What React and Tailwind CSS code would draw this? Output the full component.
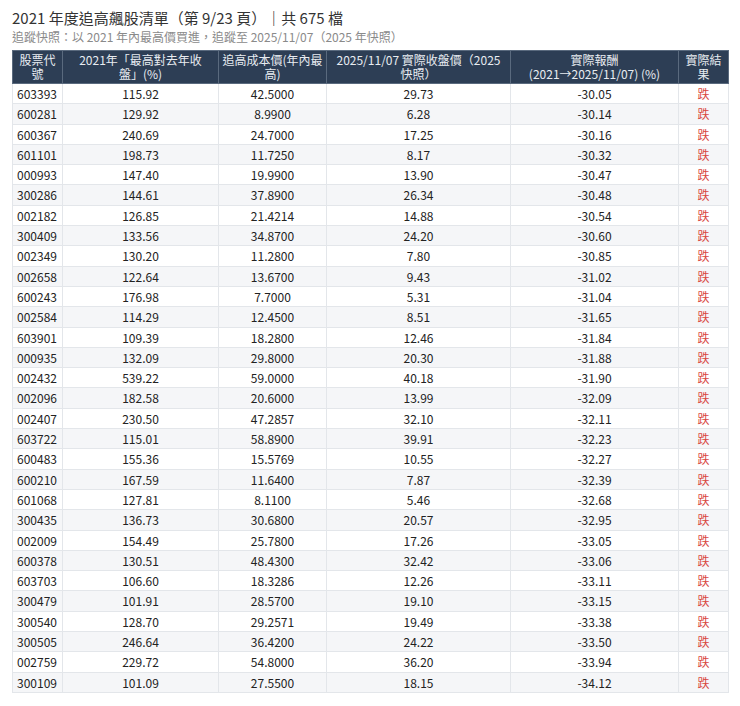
import React from "react";

const rows = [
  ["603393","115.92","42.5000","29.73","-30.05"],
  ["600281","129.92","8.9900","6.28","-30.14"],
  ["600367","240.69","24.7000","17.25","-30.16"],
  ["601101","198.73","11.7250","8.17","-30.32"],
  ["000993","147.40","19.9900","13.90","-30.47"],
  ["300286","144.61","37.8900","26.34","-30.48"],
  ["002182","126.85","21.4214","14.88","-30.54"],
  ["300409","133.56","34.8700","24.20","-30.60"],
  ["002349","130.20","11.2800","7.80","-30.85"],
  ["002658","122.64","13.6700","9.43","-31.02"],
  ["600243","176.98","7.7000","5.31","-31.04"],
  ["002584","114.29","12.4500","8.51","-31.65"],
  ["603901","109.39","18.2800","12.46","-31.84"],
  ["000935","132.09","29.8000","20.30","-31.88"],
  ["002432","539.22","59.0000","40.18","-31.90"],
  ["002096","182.58","20.6000","13.99","-32.09"],
  ["002407","230.50","47.2857","32.10","-32.11"],
  ["603722","115.01","58.8900","39.91","-32.23"],
  ["600483","155.36","15.5769","10.55","-32.27"],
  ["600210","167.59","11.6400","7.87","-32.39"],
  ["601068","127.81","8.1100","5.46","-32.68"],
  ["300435","136.73","30.6800","20.57","-32.95"],
  ["002009","154.49","25.7800","17.26","-33.05"],
  ["600378","130.51","48.4300","32.42","-33.06"],
  ["603703","106.60","18.3286","12.26","-33.11"],
  ["300479","101.91","28.5700","19.10","-33.15"],
  ["300540","128.70","29.2571","19.49","-33.38"],
  ["300505","246.64","36.4200","24.22","-33.50"],
  ["002759","229.72","54.8000","36.20","-33.94"],
  ["300109","101.09","27.5500","18.15","-34.12"],
];

export default function App() {
  return (
    <div
      className="bg-white w-[740px] h-[706px] px-[12px] pt-[8px] text-[#222]"
      style={{ fontFamily: '"Noto Sans CJK TC", "Noto Sans", sans-serif' }}
    >
      <div className="text-[15px] leading-[20px] text-[#333]">
        2021 年度追高飆股清單（第 9/23 頁）｜共 675 檔
      </div>
      <div className="text-[12px] leading-[18px] text-[#8a8a8a]">
        追蹤快照：以 2021 年內最高價買進，追蹤至 2025/11/07（2025 年快照）
      </div>
      <table className="mt-[4px] w-[716px] border-collapse table-fixed text-[12px]">
        <colgroup>
          <col className="w-[50px]" />
          <col className="w-[156px]" />
          <col className="w-[108px]" />
          <col className="w-[184px]" />
          <col className="w-[168px]" />
          <col className="w-[50px]" />
        </colgroup>
        <thead>
          <tr className="bg-[#2d3e55] text-[#e8ecf1] leading-[14px]">
            <th className="font-normal border border-[#5a6a7e] px-[3px] py-[2px] h-[32px] text-center">股票代號</th>
            <th className="font-normal border border-[#5a6a7e] px-[12px] py-[2px] text-center">2021年「最高對去年收盤」(%)</th>
            <th className="font-normal border border-[#5a6a7e] px-[3px] py-[2px] text-center">追高成本價(年內最高)</th>
            <th className="font-normal border border-[#5a6a7e] px-[5px] py-[2px] text-center">2025/11/07 實際收盤價（2025快照）</th>
            <th className="font-normal border border-[#5a6a7e] px-[3px] py-[2px] text-center">實際報酬<br />(2021→2025/11/07) (%)</th>
            <th className="font-normal border border-[#5a6a7e] px-[3px] py-[2px] text-center">實際結果</th>
          </tr>
        </thead>
        <tbody>
          {rows.map((r, i) => (
            <tr key={r[0]} className={i % 2 === 1 ? "bg-[#f5f6f8]" : "bg-white"}>
              <td className="border border-[#e3e6ea] pl-[4px] py-[2px] leading-[15.3px] text-left">{r[0]}</td>
              <td className="border border-[#e3e6ea] py-[2px] leading-[15.3px] text-center">{r[1]}</td>
              <td className="border border-[#e3e6ea] py-[2px] leading-[15.3px] text-center">{r[2]}</td>
              <td className="border border-[#e3e6ea] py-[2px] leading-[15.3px] text-center">{r[3]}</td>
              <td className="border border-[#e3e6ea] py-[2px] leading-[15.3px] text-center">{r[4]}</td>
              <td className="border border-[#e3e6ea] py-[2px] leading-[15.3px] text-center text-[#d9473f]">跌</td>
            </tr>
          ))}
        </tbody>
      </table>
    </div>
  );
}
